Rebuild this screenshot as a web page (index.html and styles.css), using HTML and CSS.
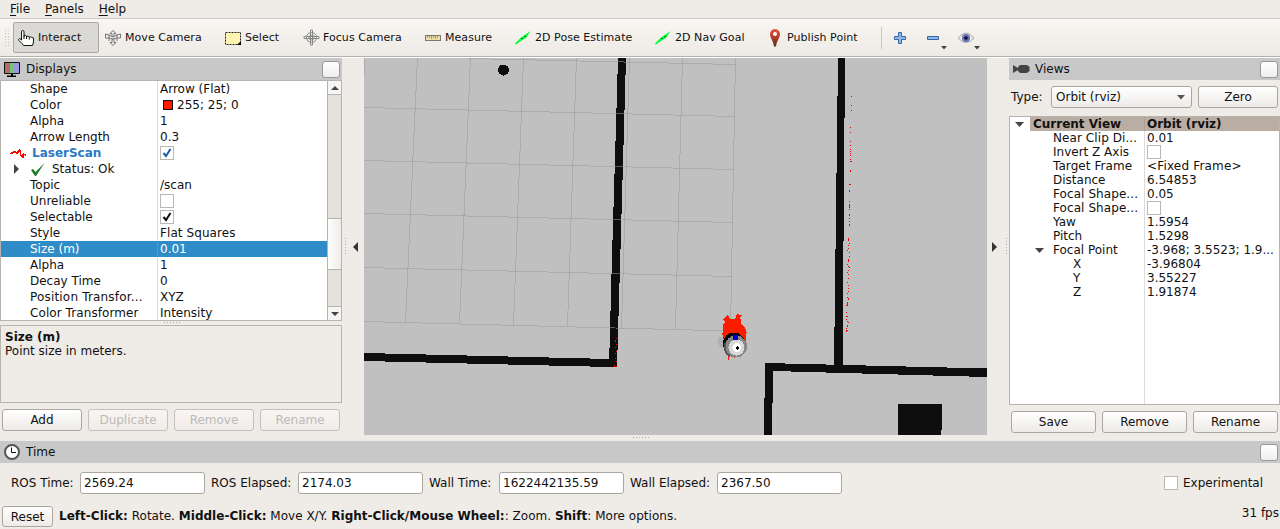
FILE: index.html
```html
<!DOCTYPE html>
<html lang="en">
<head>
<meta charset="utf-8">
<title>RViz</title>
<link rel="stylesheet" href="styles.css">
</head>
<body>
<div class="app">
  <nav class="menubar"><span><u>F</u>ile</span><span><u>P</u>anels</span><span><u>H</u>elp</span></nav>

  <div class="toolbar">
    <i class="grip"></i>
    <div class="tool active w87"><svg class="ic" viewBox="0 0 16 16"><path d="M3.5 9V1.8Q3.5.5 4.7.5T6 1.8V6.5V5.8Q7.2 4.6 8.5 6V7Q9.8 5.400 11.300 6.700V7.500Q12.500 6.300 13.500 7.300L15.500 8V12L14.500 15.500H5.500L4 13.500 1 10.500Q0 9 1.500 8.500L3.500 10Z" fill="#fff" stroke="#111"/><path d="M6 6v3M8.500 7v2M11.300 7.500v2" stroke="#111"/></svg>Interact</div>
    <div class="tool w120"><svg class="ic" viewBox="0 0 16 16"><g fill="#eee" stroke="#777"><path d="M8 .5 11 3.500H9V7H7V3.500H5ZM8 15.500 5 12.500H7V9H9V12.500H11Z"/><path d="M.5 4 4 5 8 7 12 5 15.500 4V8L12 8 8 9 4 8 .5 8ZM4 4.500V11M12 4.500V11" /></g></svg>Move Camera</div>
    <div class="tool w78"><svg class="ic" viewBox="0 0 16 16"><rect x=".5" y="2.500" width="15" height="12" fill="#fdf5b0" stroke="#222" stroke-dasharray="2 1"/><path d="M16 11v4h-4Z"/></svg>Select</div>
    <div class="tool w122"><svg class="ic focus" viewBox="0 0 17 17"><g fill="none" stroke="#888"><circle cx="8.500" cy="8.500" r="5"/><circle cx="8.500" cy="8.500" r="2.500"/><path d="M7.500 1h2v15h-2ZM1 7.500h15v2H1Z" stroke="#888"/></g></svg>Focus Camera</div>
    <div class="tool w90"><svg class="ic" viewBox="0 0 16 16"><rect x=".5" y="5.500" width="15" height="5" fill="#ecdfaa" stroke="#777"/><path d="M2.500 6v2M4.500 6v2M6.500 6v3M8.500 6v2M10.500 6v3M12.500 6v2" stroke="#999"/></svg>Measure</div>
    <div class="tool w140"><svg class="ic" viewBox="0 0 16 16"><path d="M0 13.500 6 7.500 15.500 1 11 8 8 9.500 1 14.500Z" fill="#0f3"/><path d="M6 8h2v1H6ZM9 6h2v1H9Z" fill="#174"/></svg>2D Pose Estimate</div>
    <div class="tool w112"><svg class="ic" viewBox="0 0 16 16"><path d="M0 13.500 6 7.500 15.500 1 11 8 8 9.500 1 14.500Z" fill="#0f3"/><path d="M6 8h2v1H6ZM9 6h2v1H9Z" fill="#174"/></svg>2D Nav Goal</div>
    <div class="tool w114"><svg class="ic pin" viewBox="0 0 16 18"><defs><linearGradient id="pg" x2="0" y2="1"><stop stop-color="#e8573b"/><stop offset=".55" stop-color="#a83a20"/><stop offset="1" stop-color="#4d3420"/></linearGradient></defs><path d="M8 0a5 5 0 0 1 5 5C13 9 10 11 9 17.500H7C6 11 3 9 3 5a5 5 0 0 1 5-5Z" fill="url(#pg)"/><circle cx="8" cy="5" r="2" fill="#fff"/></svg>Publish Point</div>
    <i class="sep"></i>
    <svg class="tail" width="92" height="30" viewBox="888 23 92 30"><g fill="#8fb9e4" stroke="#3268a8"><path d="M898.500 32.500h3v4h4v3h-4v4h-3v-4h-4v-3h4Z"/><path d="M927.500 36.500h11v3h-11Z"/></g><path d="M958 38Q966 28 974 38 966 47 958 38Z" fill="#ececec" stroke="#aaa"/><circle cx="966" cy="38" r="4" fill="#6471b8"/><circle cx="966" cy="38" r="1.800" fill="#111"/><path d="M941 46h6l-3 3.500ZM974 46h6l-3 3.500Z" fill="#444"/></svg>
  </div>

  <main class="work">
    <section class="displays">
      <header class="dock"><svg width="16" height="17" viewBox="0 0 16 17"><path d="M.5 1.500h15v11H.5Z" stroke="#111" fill="#111"/><path d="M1 2h5v10H1Z" fill="#b86a6a"/><path d="M6 2h4v10H6Z" fill="#76c576"/><path d="M10 2h5v10h-5Z" fill="#9a9ae0"/><path d="M7 13h2v1.500h3V16H3v-1.500h4Z"/></svg><span>Displays</span><b class="float"></b></header>
      <div class="tree left-tree">
        <div class="rows">
          <div class="row"><span>Shape</span><span>Arrow (Flat)</span></div>
          <div class="row"><span>Color</span><span><i class="swatch"></i>255; 25; 0</span></div>
          <div class="row"><span>Alpha</span><span>1</span></div>
          <div class="row"><span>Arrow Length</span><span>0.3</span></div>
          <div class="row laser"><span><svg width="16" height="12" viewBox="0 0 16 12" shape-rendering="crispEdges"><path d="M0 6H1V5H3V4H6V5H7V4H8V3H9V2H10V3H11V8H12V7H13V6H14V7H16V9H15V8H14V11H12V10H11V9H10V5H9V6H8V7H6V6H3V7H0Z" fill="#f00"/></svg><b>LaserScan</b></span><span><svg class="cb" viewBox="0 0 12 12"><path d="M2.500 6 5 9 9.500 2" stroke="#1b5fa8"/></svg></span></div>
          <div class="row status"><span><svg width="5" height="10" viewBox="0 0 5 10"><path d="M0 0 5 5 0 10Z" fill="#444"/></svg><svg width="14" height="13" viewBox="0 0 14 13"><path d="M0 7 2 6 4.500 9 13.500 0 5 13H4Z" fill="#1f7a24"/></svg>Status: Ok</span><span></span></div>
          <div class="row"><span>Topic</span><span>/scan</span></div>
          <div class="row"><span>Unreliable</span><span><svg class="cb" viewBox="0 0 12 12"></svg></span></div>
          <div class="row"><span>Selectable</span><span><svg class="cb" viewBox="0 0 12 12"><path d="M2.500 6 5 9 9.500 2" stroke="#111"/></svg></span></div>
          <div class="row"><span>Style</span><span class="wide">Flat Squares</span></div>
          <div class="row sel"><span>Size (m)</span><span>0.01</span></div>
          <div class="row"><span>Alpha</span><span>1</span></div>
          <div class="row"><span>Decay Time</span><span>0</span></div>
          <div class="row"><span class="wider">Position Transfor...</span><span>XYZ</span></div>
          <div class="row"><span class="wide">Color Transformer</span><span>Intensity</span></div>
        </div>
        <div class="scroll"><i class="up"></i><i class="track"></i><i class="thumb"></i><i class="track2"></i><i class="down"></i></div>
      </div>
      <div class="hdots"></div>
      <div class="desc"><b>Size (m)</b><br>Point size in meters.</div>
      <div class="buttons"><span class="btn">Add</span><span class="btn off">Duplicate</span><span class="btn off">Remove</span><span class="btn off">Rename</span></div>
    </section>

    <div class="split ls"><i class="vdots"></i><svg width="5" height="10" viewBox="0 0 5 10"><path d="M5 0 0 5 5 10Z" fill="#333"/></svg></div>

    <svg class="map" width="623" height="377" viewBox="364 58 623 377" shape-rendering="crispEdges">
      <rect x="364" y="58" width="623" height="377" fill="#c0c0c0"/>
      <g fill="#0e0e0e">
        <path d="M618 58H626L620.300 256 617 367H609L612 256Z"/>
        <path d="M364 353 610 359V367L364 361Z"/>
        <path d="M838 58H845L842.500 366H834Z"/>
        <path d="M765 363 987 368.500V377L773 371 772 435H764Z"/>
        <path d="M898 404h44v22l-1 9h-43Z"/>
        <circle cx="503.500" cy="70" r="5.500"/>
      </g>
      <g stroke="#999" stroke-opacity=".55" fill="none">
        <path d="M364.500 58V75M417.500 58 405.500 322M470.500 58 459.500 323.500M523.500 58 513.500 325M576.500 58 567.500 326M629.500 58 621.500 328M682.500 58 675.500 329M735.500 58 730.500 331"/>
        <path d="M468 58.500 735 64.500M364 107.500 735 116.500M364 160.500 734 169.500M364 213.500 733 222.500M364 267.500 732 276.500M364 321.500 731 331"/>
      </g>
      <path fill="#f00" d="M851 96h1v1h-1zM851 105h1v1h-1zM851 110h1v1h-1zM850 127h1v1h-1zM850 132h1v1h-1zM850 141h1v1h-1zM850 145h1v1h-1zM850 149h1v1h-1zM850 151h1v1h-1zM850 153h1v1h-1zM850 155h1v1h-1zM850 159h1v1h-1zM850 161h2v1h-2zM850 170h1v2h-1zM849 184h2v1h-2zM849 190h1v2h-1zM849 201h1v1h-1zM849 204h1v4h-1zM849 209h1v1h-1zM849 214h1v2h-1zM849 218h1v1h-1zM849 221h1v1h-1zM849 224h1v2h-1zM848 238h1v3h-1zM849 243h1v1h-1zM848 245h1v1h-1zM848 248h1v1h-1zM847 250h1v1h-1zM849 252h1v1h-1zM849 256h1v1h-1zM848 259h1v3h-1zM847 264h1v1h-1zM848 266h1v1h-1zM849 267h1v1h-1zM848 270h1v1h-1zM847 272h1v1h-1zM848 274h1v1h-1zM848 278h1v1h-1zM847 282h1v1h-1zM848 285h1v1h-1zM848 288h1v1h-1zM848 291h1v1h-1zM847 293h1v1h-1zM847 297h1v1h-1zM848 298h1v2h-1zM847 302h1v3h-1zM846 305h2v1h-2zM846 312h1v1h-1zM846 316h2v1h-2zM846 319h1v1h-1zM847 321h1v1h-1zM848 322h1v1h-1zM847 325h1v2h-1zM846 328h1v1h-1zM846 330h2v1h-2zM846 331h1v1h-1zM616 338h1v1h-1zM615 340h1v2h-1zM616 344h1v1h-1zM615 347h1v1h-1zM616 351h1v1h-1zM615 353h1v1h-1zM615 358h1v1h-1zM616 361h1v1h-1zM614 365h1v2h-1zM616 366h1v1h-1z"/>
      <path d="M718 337h7v8l-1 3h-3l-3-5Z" fill="#b0b0b0"/>
      <path d="M723 338V325L725 322 723 320 724 318 726 316 727 315 729 316 730 319H734L736 317 735 316 738 313 739 315 742 315 740 317 741 320 741 324 744 326 746 330V342H725ZM728 350V358L729 361V350ZM722 333h1v2h-1zM746 332h1v1h-1zM734 357h1v1h-1z" fill="#ff1b00"/>
      <circle cx="734" cy="343.500" r="11" fill="#080808"/>
      <circle cx="736" cy="346.500" r="11" fill="#888"/>
      <path d="M725.500 343A10 10 0 0 0 730 356" stroke="#555" stroke-width="2" fill="none"/>
      <circle cx="736.500" cy="347.500" r="8" fill="#d8d8d8"/>
      <circle cx="737" cy="347.500" r="4.500" fill="#fff"/>
      <path d="M733 335h5v5h-5Z" fill="#00c"/>
      <path d="M737 346h1v1h1v2h-1v1h-1v-1h-1v-2h1z"/>
    </svg>

    <div class="split rs"><svg width="5" height="10" viewBox="0 0 5 10"><path d="M0 0 5 5 0 10Z" fill="#333"/></svg><i class="vdots"></i></div>

    <section class="views">
      <header class="dock"><svg width="17" height="10" viewBox="0 0 17 10"><path d="M0 1 5 4 5 6 0 9ZM7 1H14L16.500 3V7L14 9H7L5 7V3Z" fill="#444"/></svg><span>Views</span><b class="float"></b></header>
      <div class="type"><span>Type:</span><span class="btn combo">Orbit (rviz)<svg width="8" height="5" viewBox="0 0 8 5"><path d="M0 0H8L4 4.500Z" fill="#555"/></svg></span><span class="btn zero">Zero</span></div>
      <div class="tree right-tree">
        <div class="row cur"><span><svg class="tri" viewBox="0 0 9 5"><path d="M0 0H9L4.500 5Z"/></svg><b>Current View</b></span><span><b>Orbit (rviz)</b></span></div>
        <div class="row"><span class="wide">Near Clip Di...</span><span>0.01</span></div>
        <div class="row"><span>Invert Z Axis</span><span><svg class="cb" viewBox="0 0 12 12"></svg></span></div>
        <div class="row"><span class="wide">Target Frame</span><span class="wider">&lt;Fixed Frame&gt;</span></div>
        <div class="row"><span>Distance</span><span>6.54853</span></div>
        <div class="row"><span class="wide">Focal Shape...</span><span>0.05</span></div>
        <div class="row"><span class="wide">Focal Shape...</span><span><svg class="cb" viewBox="0 0 12 12"></svg></span></div>
        <div class="row"><span>Yaw</span><span>1.5954</span></div>
        <div class="row"><span>Pitch</span><span>1.5298</span></div>
        <div class="row open"><span><svg class="tri" viewBox="0 0 9 5"><path d="M0 0H9L4.500 5Z"/></svg>Focal Point</span><span>-3.968; 3.5523; 1.9...</span></div>
        <div class="row sub"><span>X</span><span>-3.96804</span></div>
        <div class="row sub"><span>Y</span><span>3.55227</span></div>
        <div class="row sub"><span>Z</span><span>1.91874</span></div>
        <div class="row rest"><span></span><span></span></div>
      </div>
      <div class="buttons vb"><span class="btn">Save</span><span class="btn">Remove</span><span class="btn">Rename</span></div>
    </section>
  </main>

  <div class="bottomgap"><i class="hdots2"></i></div>
  <header class="dock time"><svg width="16" height="16" viewBox="0 0 16 16"><circle cx="8" cy="8" r="7" fill="#fff" stroke="#555" stroke-width="2"/><path d="M7.500 3.500V8.500H12" stroke="#111" fill="none"/></svg><span>Time</span><b class="float"></b></header>
  <div class="clocks">
    <label class="l1">ROS Time:</label><span class="field">2569.24</span>
    <label class="l2">ROS Elapsed:</label><span class="field">2174.03</span>
    <label class="l3">Wall Time:</label><span class="field">1622442135.59</span>
    <label class="l4">Wall Elapsed:</label><span class="field">2367.50</span>
    <span class="exp"><i></i>Experimental</span>
  </div>
  <footer class="foot"><span class="btn reset">Reset</span><p><b>Left-Click:</b> Rotate. <b>Middle-Click:</b> Move X/Y. <b>Right-Click/Mouse Wheel:</b>: Zoom. <b>Shift</b>: More options.</p><span class="fps">31 fps</span></footer>
</div>
</body>
</html>
```
FILE: styles.css
```css
* { box-sizing: border-box; }
body { margin: 0; background: #efebe7; color: #111; font: 12px/14px "DejaVu Sans", sans-serif; }
svg { display: block; flex: none; }
i { display: block; flex: none; }
.app { width: 1280px; height: 529px; overflow: hidden; display: flex; flex-direction: column; white-space: nowrap; }
.app > * { flex: none; }
.menubar { height: 19px; border-bottom: 1px solid #cfcbc7; padding: 2px 0 0 10px; display: flex; gap: 15px; }
.menubar u { text-underline-offset: 2px; text-decoration-thickness: 1px; }
.toolbar { height: 39px; background: linear-gradient(#f9f7f3, #ede9e4); border-bottom: 1px solid #fff; box-shadow: inset 0 -1px #b7b1ac; display: flex; align-items: center; padding-bottom: 1px; font-size: 11px; letter-spacing: .05px; }
.grip { width: 4px; height: 16px; margin: 0 4px 0 5px; background: linear-gradient(#c4c0bb, #c4c0bb) 0 0 / 0 0 no-repeat, conic-gradient(#c4c0bb 25%, transparent 0) -1px 0 / 3px 3px; background: conic-gradient(from 0deg at 1px 1px, transparent 75%, #c4c0bb 0) 0 0 / 3px 3px; }
.tool { height: 31px; display: flex; align-items: center; padding-left: 5px; gap: 4px; }
.tool.active { background: #dbd9d5; border: 1px solid #aaa7a3; border-radius: 2px; padding-left: 4px; width: 86px; margin-right: 1px; }
.ic { width: 16px; height: 16px; }
.focus { width: 17px; height: 17px; margin-right: -1px; }
.pin { height: 18px; }
.w120 { width: 120px; } .w78 { width: 78px; } .w122 { width: 122px; } .w90 { width: 90px; }
.w140 { width: 140px; } .w112 { width: 112px; } .w114 { width: 114px; }
.sep { width: 1px; height: 22px; background: #cbc8c4; margin: 0 11px 0 5px; }
.tail { margin-left: -5px; }
.work { height: 377px; display: grid; grid-template-columns: 342px 22px 623px 22px 271px; }
.dock { height: 22px; background: #c8c8c8; display: flex; align-items: center; padding: 0 2px 0 4px; gap: 6px; }
.float { width: 18px; height: 17px; margin-left: auto; border: 1px solid #999; border-radius: 3px; background: linear-gradient(#fff, #efeeec); }
.displays, .views { display: flex; flex-direction: column; min-width: 0; }
.tree { border: 1px solid #b7b3af; background: #fff; overflow: hidden; }
.left-tree { height: 241px; display: flex; }
.rows { width: 326px; flex: none; }
.row { display: grid; grid-template-columns: 157px 1fr; height: 16px; }
.row > span { display: flex; align-items: center; }
.row > span:first-child { padding-left: 29px; border-right: 1px solid #dcdcdc; }
.row > span:last-child { padding-left: 2px; }
.row.sel { background: #308cc6; color: #fff; }
.row.sel > span:first-child { border-color: #4c9bcf; }
.wide { letter-spacing: .08px; }
.wider { letter-spacing: .18px; }
.swatch { width: 10px; height: 10px; background: #ff1900; border: 1px solid #111; margin: 0 4px 0 3px; }
.cb { width: 14px; height: 14px; border: 1px solid #bbb8b4; background: #fff; fill: none; stroke-width: 2; }
.laser > span:first-child { padding-left: 9px; gap: 6px; color: #2a79c6; }
.row.status > span:first-child { padding-left: 13px; }
.status svg + svg { margin: 0 7px 0 12px; }
.scroll { width: 14px; border-left: 1px solid #b7b3af; background: #e4e0dc; }
.up, .down { height: 14px; background: #f7f5f3; display: flex; align-items: center; justify-content: center; }
.up { border-bottom: 1px solid #b7b3af; }
.up::after, .down::after { content: ""; border: 4px solid transparent; border-bottom-color: #444; border-top: 0; }
.down { border-top: 1px solid #b7b3af; }
.down::after { border-top: 4px solid #444; border-bottom: 0; }
.track { height: 123px; }
.thumb { height: 52px; border: solid #b7b3af; border-width: 1px 0; background: linear-gradient(90deg, #fdfdfc, #efedea); }
.track2 { height: 36px; }
.hdots { width: 17px; height: 1px; margin: 1px 0 2px 164px; background: repeating-linear-gradient(90deg, #aaa 0 1px, transparent 1px 3px); }
.desc { height: 78px; border: 1px solid #b7b3af; padding: 4px; }
.buttons { display: flex; gap: 6px; padding: 6px 2px 0; }
.btn { height: 22px; border: 1px solid #aaa6a2; border-radius: 3px; background: linear-gradient(#fff, #edebe8); display: flex; align-items: center; justify-content: center; }
.buttons .btn { flex: 1; }
.btn.off { color: #bdbab7; border-color: #c4c0bc; background: linear-gradient(#f8f6f4, #efece9); }
.split { display: flex; align-items: center; height: 377px; gap: 7px; padding-left: 3px; }
.ls { padding-left: 2px; }
.rs { padding-left: 5px; gap: 9px; }
.vdots { width: 1px; height: 17px; background: repeating-linear-gradient(#aaa 0 1px, transparent 1px 3px); margin-left: 1px; }
.rs .vdots { margin-left: 0; }
.views .dock { gap: 5px; }
.type { display: flex; align-items: center; padding: 6px 2px 8px; }
.type > span:first-child { width: 40px; }
.combo { width: 141px; justify-content: space-between; padding: 0 6px 0 4px; }
.zero { width: 80px; margin-left: 6px; }
.right-tree { height: 289px; display: flex; flex-direction: column; }
.right-tree .row { height: 14px; grid-template-columns: 135px 1fr; flex: none; }
.right-tree .row > span:first-child { padding-left: 43px; }
.right-tree .cur { background: linear-gradient(90deg, #fff 20px, #baada3 20px); }
.right-tree .cur > span:first-child { padding-left: 5px; gap: 9px; border-color: #aaa098; }
.right-tree .open > span:first-child { padding-left: 25px; gap: 9px; }
.right-tree .sub > span:first-child { padding-left: 63px; }
.right-tree .rest { flex: 1; height: auto; }
.tri { width: 9px; height: 5px; fill: #444; }
.bottomgap { height: 6px; padding: 2px 0 0 633px; }
.hdots2 { width: 17px; height: 1px; background: repeating-linear-gradient(90deg, #aaa 0 1px, transparent 1px 3px); }
.clocks { height: 40px; display: flex; align-items: center; }
.field { width: 125px; height: 22px; border: 1px solid #aaa6a2; border-radius: 3px; background: #fff; padding: 3px 3px; }
.l1 { width: 80px; padding-left: 11px; } .l2 { width: 93px; padding-left: 6px; }
.l3 { width: 76px; padding-left: 6px; } .l4 { width: 93px; padding-left: 6px; }
.exp { display: flex; align-items: center; gap: 5px; margin-left: 322px; }
.exp i { width: 14px; height: 14px; border: 1px solid #bbb8b4; background: #fff; }
.foot { height: 26px; display: flex; align-items: center; padding: 1px 1px 0 2px; }
.reset { width: 51px; height: 21px; margin-top: 0; }
.foot p { margin: -2px 0 0 6px; letter-spacing: .02px; }
.fps { margin: -7px 0 0 auto; }
```
